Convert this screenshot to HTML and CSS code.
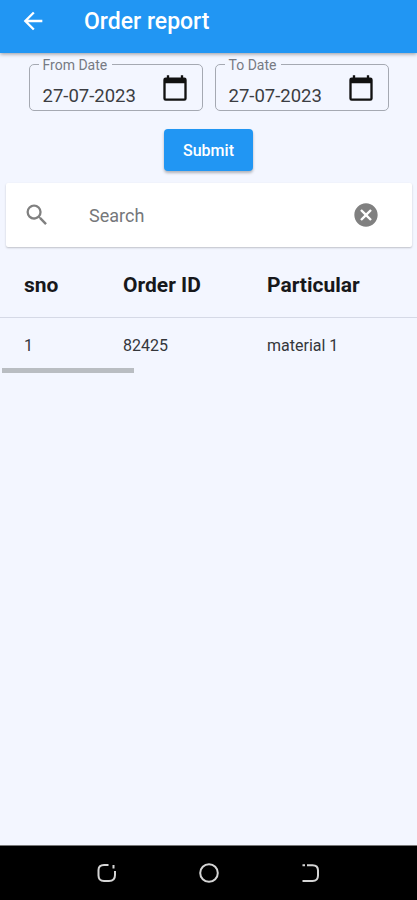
FILE: index.html
```html
<!DOCTYPE html>
<html lang="en">
<head>
<meta charset="utf-8">
<title>Order report</title>
<link rel="stylesheet" href="styles.css">
</head>
<body>
<div class="screen">
  <header class="appbar">
    <svg class="icon" viewBox="0 0 24 24"><path d="M20 11H7.83l5.59-5.59L12 4l-8 8 8 8 1.41-1.41L7.83 13H20v-2z"/></svg>
    <h1 class="title">Order report</h1>
  </header>
  <main class="content">
    <div class="dates">
      <fieldset class="field">
        <legend class="label">From Date</legend>
        <span class="value">27-07-2023</span>
        <svg class="icon" viewBox="0 0 24 24"><path fill-rule="evenodd" d="M20 3H19V1H17V3H7V1H5V3H4Q2 3 2 5V21Q2 23 4 23H20Q22 23 22 21V5Q22 3 20 3ZM20 21H4V8H20Z"/></svg>
      </fieldset>
      <fieldset class="field">
        <legend class="label">To Date</legend>
        <span class="value">27-07-2023</span>
        <svg class="icon" viewBox="0 0 24 24"><path fill-rule="evenodd" d="M20 3H19V1H17V3H7V1H5V3H4Q2 3 2 5V21Q2 23 4 23H20Q22 23 22 21V5Q22 3 20 3ZM20 21H4V8H20Z"/></svg>
      </fieldset>
    </div>
    <button class="submit">Submit</button>
    <div class="search">
      <svg class="icon" viewBox="0 0 24 24"><path d="M15.500 14h-.79l-.28-.27A6.470 6.470 0 0 0 16 9.500 6.500 6.500 0 1 0 9.500 16c1.610 0 3.090-.59 4.230-1.570l.27.28v.79l5 4.990L20.490 19l-4.990-5zm-6 0C7.010 14 5 11.990 5 9.500S7.010 5 9.500 5 14 7.010 14 9.500 11.990 14 9.500 14z"/></svg>
      <span class="placeholder">Search</span>
      <svg class="icon" viewBox="0 0 24 24"><path d="M12 2C6.470 2 2 6.470 2 12s4.470 10 10 10 10-4.470 10-10S17.530 2 12 2zm5 13.590L15.590 17 12 13.410 8.410 17 7 15.590 10.590 12 7 8.410 8.410 7 12 10.590 15.590 7 17 8.410 13.410 12 17 15.590z"/></svg>
    </div>
    <div class="row head"><span>sno</span><span>Order ID</span><span>Particular</span></div>
    <div class="row"><span>1</span><span>82425</span><span>material 1</span></div>
    <div class="scrollbar"></div>
  </main>
  <nav class="navbar">
    <svg viewBox="0 0 22 22"><path d="M12.500 3H8Q2.500 3 2.500 8v5.500Q2.500 19 8 19h5q6 0 6-6V9M17.500 3v3.500"/></svg>
    <svg viewBox="0 0 22 22"><circle cx="11" cy="11" r="8.800"/></svg>
    <svg viewBox="0 0 22 22"><path d="M2.500 3.200h2.500M7 3.200h5.500Q18 3.200 18 8.500v5q0 5.500-5.500 5.500H2.500"/></svg>
  </nav>
</div>
</body>
</html>
```
FILE: styles.css
```css
* { box-sizing: border-box; }
body { margin: 0; font-family: Roboto, "Liberation Sans", sans-serif; color: #202124; }
.screen { height: 900px; display: flex; flex-direction: column; background: #f3f6ff; overflow: hidden; }
.icon { width: 28px; height: 28px; fill: currentColor; flex: none; display: block; }
.appbar { height: 53px; flex: none; display: flex; align-items: center; padding: 0 19px 12px; gap: 37px; background: #2196f3; color: #fff; box-shadow: 0 1px 4px rgba(0,0,0,.4); }
.title { margin: 0; padding-top: 2px; font-size: 23px; line-height: 28px; font-weight: 500; }
.content { flex: 1; display: flex; flex-direction: column; padding-top: 4px; }
.dates { display: flex; justify-content: center; gap: 12px; }
.field { width: 174px; height: 54px; margin: 0; padding: 0 13px 0 9px; border: 1px solid #a5a9b2; border-radius: 5px; display: flex; align-items: center; justify-content: space-between; min-width: 0; }
.label { padding: 1px 5px 0 4px; font-size: 14px; line-height: 14px; color: #777a83; }
.value { padding: 9px 0 0 4px; font-size: 18.500px; line-height: 22px; color: #3b3d42; }
.field .icon { color: #111; margin-top: -6px; }
.submit { align-self: center; width: 89px; height: 42px; margin: 18px 0 12px; padding: 0; border: 0; border-radius: 4px; background: #2196f3; color: #fff; font: 500 16px Roboto, sans-serif; box-shadow: 0 2px 3px rgba(0,0,0,.28); }
.search { height: 64px; margin: 0 5px 0 6px; padding: 0 32px 0 17px; display: flex; align-items: center; background: #fff; border-radius: 2px; box-shadow: 0 1px 2px rgba(0,0,0,.22); color: #808080; }
.placeholder { flex: 1; margin-left: 38px; font-size: 18px; color: #75777a; }
.row { height: 50px; padding: 4px 0 0 24px; display: grid; grid-template-columns: 99px 144px 1fr; align-items: center; font-size: 16px; color: #34363b; }
.head { height: 71px; padding-top: 5px; border-bottom: 1px solid #d5d9e6; font-size: 21px; font-weight: 700; color: #17181b; }
.scrollbar { width: 132px; height: 5px; margin-left: 2px; background: #b9bdc2; }
.navbar { height: 55px; flex: none; display: flex; justify-content: center; gap: 80px; align-items: center; background: #000; border-top: 1px solid #777; }
.navbar svg { width: 22px; height: 22px; fill: none; stroke: #d5d5d5; stroke-width: 2; }
```
